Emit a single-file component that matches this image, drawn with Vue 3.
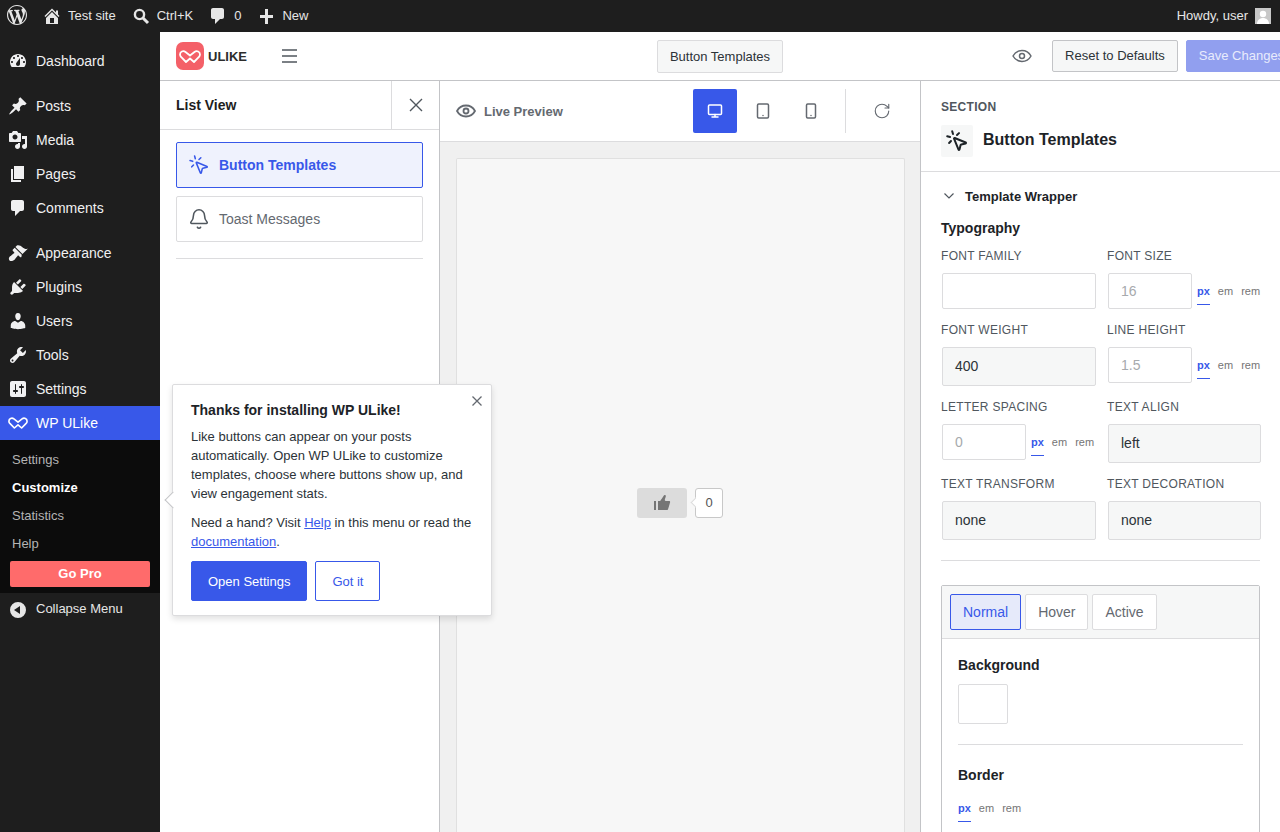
<template>
  <div class="shell">
    <header class="adminbar">
      <div class="bar-left">
        <svg class="wp-logo" viewBox="0 0 20 20"><path :d="icons.wp" /></svg>
        <span class="bar-item"><svg viewBox="0 0 20 20"><path :d="icons.home" fill-rule="evenodd" /></svg>Test site</span>
        <span class="bar-item"><svg viewBox="0 0 20 20"><circle cx="8.5" cy="8.5" r="4.6" fill="none" stroke="currentColor" stroke-width="2.4" /><path d="M12 12l5 5" stroke="currentColor" stroke-width="3" /></svg>Ctrl+K</span>
        <span class="bar-item"><svg viewBox="0 0 20 20"><path :d="icons.comments" /></svg>0</span>
        <span class="bar-item"><svg viewBox="0 0 20 20"><path d="M9 3h3v6h5v3h-5v6H9v-6H4V9h5z" /></svg>New</span>
      </div>
      <div class="howdy">
        Howdy, user
        <span class="avatar">
          <svg viewBox="0 0 16 16"><circle cx="8" cy="6" r="3.2" fill="#fff" /><path d="M2 16c0-4 3-6 6-6s6 2 6 6z" fill="#fff" /></svg>
        </span>
      </div>
    </header>

    <div class="body">
      <nav class="sidebar">
        <ul class="menu">
          <li v-for="item in menu" :key="item.label" class="menu-item" :class="{ current: item.current, gap: item.gap }">
            <svg v-if="item.icon" viewBox="0 0 20 20"><path :d="icons[item.icon]" fill-rule="evenodd" /></svg>
            <svg v-else class="brand-mark" viewBox="3 8 22 13"><path :d="heart" fill="none" stroke="currentColor" stroke-width="1.800" stroke-linejoin="round" /></svg>
            {{ item.label }}
          </li>
        </ul>
        <ul class="submenu">
          <li v-for="sub in submenu" :key="sub" :class="{ on: sub === 'Customize' }">{{ sub }}</li>
          <li class="go-pro-row"><a class="go-pro">Go Pro</a></li>
        </ul>
        <div class="collapse">
          <svg viewBox="0 0 20 20"><path d="M18 10a8 8 0 1 0-16 0 8 8 0 0 0 16 0zm-6-4v8l-6-4z" fill-rule="evenodd" /></svg>
          Collapse Menu
        </div>
      </nav>

      <main class="editor">
        <div class="toolbar">
          <div class="tool-left">
            <svg class="logo" viewBox="0 0 28 28">
              <rect width="28" height="28" rx="7" fill="#f46068" />
              <path :d="heart" fill="none" stroke="#fff" stroke-width="1.800" stroke-linejoin="round" />
            </svg>
            <span class="logo-text">ULIKE</span>
            <svg class="burger" viewBox="0 0 15 14"><path d="M0 1h15M0 7h15M0 13h15" stroke="#50575e" stroke-width="1.500" /></svg>
          </div>
          <button class="btn title-btn">Button Templates</button>
          <div class="tool-right">
            <svg class="stroke-icon eye" viewBox="0 0 20 14"><path d="M1 7c2-3.600 5-5.500 9-5.500S17 3.400 19 7c-2 3.600-5 5.500-9 5.500S3 10.600 1 7z" /><circle cx="10" cy="7" r="2.500" /></svg>
            <button class="btn reset-btn">Reset to Defaults</button>
            <button class="btn save-btn">Save Changes</button>
          </div>
        </div>

        <div class="panes">
          <aside class="list-pane">
            <div class="list-head">
              <span class="list-title">List View</span>
              <span class="list-close"><svg viewBox="0 0 14 14"><path d="M1 1l12 12M13 1L1 13" stroke="#50575e" stroke-width="1.400" /></svg></span>
            </div>
            <div class="list-body">
              <div class="list-item active">
                <svg class="stroke-icon" viewBox="0 0 24 24"><path v-for="d in pointerPaths" :key="d" :d="d" /></svg>
                Button Templates
              </div>
              <div class="list-item">
                <svg class="stroke-icon" viewBox="0 0 24 24"><path d="M10.268 21a2 2 0 0 0 3.464 0" /><path d="M3.262 15.326A1 1 0 0 0 4 17h16a1 1 0 0 0 .74-1.673C19.410 13.956 18 12.499 18 8A6 6 0 0 0 6 8c0 4.499-1.411 5.956-2.738 7.326" /></svg>
                Toast Messages
              </div>
              <hr class="list-rule" />
            </div>
          </aside>

          <section class="preview-pane">
            <div class="preview-bar">
              <span class="live"><svg class="stroke-icon" viewBox="0 0 20 14"><path d="M1 7c2-3.600 5-5.500 9-5.500S17 3.400 19 7c-2 3.600-5 5.500-9 5.500S3 10.600 1 7z" /><circle cx="10" cy="7" r="2.500" /></svg>Live Preview</span>
              <div class="devices">
                <span class="device on"><svg class="stroke-icon" viewBox="0 0 16 16"><rect x="1.500" y="2" width="13" height="9.500" rx="1" /><path d="M5 14h6M8 11.500V14" /></svg></span>
                <span class="device"><svg class="stroke-icon" viewBox="0 0 16 16"><rect x="2.500" y="1" width="11" height="14" rx="1.200" /><path d="M8 12.500h.01" /></svg></span>
                <span class="device"><svg class="stroke-icon" viewBox="0 0 16 16"><rect x="3.500" y="1" width="9" height="14" rx="1.200" /><path d="M8 12.500h.01" /></svg></span>
              </div>
              <span class="refresh"><svg class="stroke-icon" viewBox="0 0 24 24"><path d="M21 12a9 9 0 1 1-9-9c2.520 0 4.930 1 6.740 2.740L21 8" /><path d="M21 3v5h-5" /></svg></span>
            </div>
            <div class="canvas">
              <div class="frame">
                <div class="like">
                  <span class="like-btn"><svg viewBox="0 0 20 20"><path d="M12.720 2c.15-.02.26.02.41.07.56.19.83.79.66 1.350-.17.55-1 3.040-1 3.580 0 .53.75 1 1.350 1h3c.6 0 1 .4 1 1s-2 7-2 7c-.17.39-.55 1-1 1H6V8h2.140c.41-.41 3.300-4.710 3.580-5.270.21-.41.6-.68 1-.73zM2 8h2v9H2V8z" /></svg></span>
                  <span class="like-count">0</span>
                </div>
              </div>
            </div>
          </section>

          <aside class="settings-pane">
            <div class="section-head">
              <div class="eyebrow">SECTION</div>
              <div class="section-title">
                <span class="section-icon"><svg class="stroke-icon" viewBox="0 0 24 24"><path v-for="d in pointerPaths" :key="d" :d="d" /></svg></span>
                Button Templates
              </div>
            </div>
            <div class="section-body">
              <div class="accordion"><svg viewBox="0 0 12 8"><path d="M1.500 1.500L6 6l4.500-4.500" fill="none" stroke="#50575e" stroke-width="1.200" /></svg>Template Wrapper</div>
              <h3 class="group-title">Typography</h3>
              <div class="fields">
                <div v-for="f in fields" :key="f.label" class="field">
                  <label>{{ f.label }}</label>
                  <div v-if="f.type === 'select'" class="select">{{ f.value }}</div>
                  <div v-else-if="f.type === 'text'" class="input wide"></div>
                  <div v-else class="with-units">
                    <div class="input number">{{ f.value }}</div>
                    <div class="units"><span class="on">px</span><span>em</span><span>rem</span></div>
                  </div>
                </div>
              </div>
              <hr class="rule" />
              <div class="states">
                <div class="state-tabs">
                  <span v-for="t in tabs" :key="t" class="state-tab" :class="{ on: t === 'Normal' }">{{ t }}</span>
                </div>
                <div class="state-body">
                  <h3 class="group-title">Background</h3>
                  <div class="swatch"></div>
                  <hr class="inner-rule" />
                  <h3 class="group-title">Border</h3>
                  <div class="units"><span class="on">px</span><span>em</span><span>rem</span></div>
                </div>
              </div>
            </div>
          </aside>
        </div>

        <div class="pointer">
          <span class="pointer-arrow"></span>
          <span class="pointer-close"><svg viewBox="0 0 12 12"><path d="M1.500 1.500l9 9M10.500 1.500l-9 9" stroke="#646970" stroke-width="1.300" /></svg></span>
          <h4>Thanks for installing WP ULike!</h4>
          <p>Like buttons can appear on your posts automatically. Open WP ULike to customize templates, choose where buttons show up, and view engagement stats.</p>
          <p>Need a hand? Visit <a>Help</a> in this menu or read the <a>documentation</a>.</p>
          <div class="pointer-actions">
            <button class="primary">Open Settings</button>
            <button class="ghost">Got it</button>
          </div>
        </div>
      </main>
    </div>
  </div>
</template>

<script setup>
const heart = 'M4 12.500c0-2.800 3.200-4.300 5.500-2.500l4.500 3.500 4.500-3.500c2.300-1.800 5.500-.3 5.500 2.500 0 1-.5 2-1.300 2.700L18 20l-4-3.500L10 20l-4.700-4.800C4.500 14.500 4 13.500 4 12.500z'

const icons = {
  wp: 'M20 10c0-5.510-4.490-10-10-10C4.480 0 0 4.490 0 10c0 5.520 4.480 10 10 10 5.510 0 10-4.480 10-10zM7.780 15.370L4.370 6.220c.55-.02 1.170-.08 1.170-.08.5-.06.44-1.130-.06-1.110 0 0-1.450.11-2.370.11-.18 0-.37 0-.58-.01C4.120 2.690 6.870 1.110 10 1.110c2.330 0 4.450.87 6.050 2.340-.68-.11-1.650.39-1.650 1.580 0 .74.45 1.360.9 2.100.35.61.55 1.360.55 2.460 0 1.490-1.400 5-1.400 5l-3.030-8.370c.54-.02.82-.17.82-.17.5-.05.44-1.250-.06-1.220 0 0-1.440.12-2.380.12-.87 0-2.330-.12-2.330-.12-.5-.03-.56 1.200-.06 1.220l.92.08 1.260 3.410zM17.410 10c.24-.64.74-1.870.43-4.250.7 1.290 1.050 2.710 1.050 4.250 0 3.290-1.730 6.240-4.400 7.780.97-2.590 1.940-5.200 2.920-7.780zM6.100 18.090C3.120 16.650 1.110 13.530 1.110 10c0-1.300.23-2.480.72-3.590C3.250 10.300 4.670 14.200 6.100 18.090zm4.030-6.630l2.580 6.980c-.86.29-1.760.45-2.710.45-.79 0-1.570-.11-2.290-.33.81-2.380 1.620-4.740 2.420-7.100z',
  home: 'M16 8.500l1.530 1.530-1.060 1.060L10 4.620l-6.470 6.470-1.060-1.060L10 2.500l4 4v-2h2v4zm-6-2.460l6 5.990V18H4v-5.970zM12 17v-5H8v5h4z',
  dashboard: 'M3.760 16h12.480c1.100-1.370 1.760-3.110 1.760-5 0-4.420-3.580-8-8-8s-8 3.580-8 8c0 1.890.66 3.630 1.760 5zM10 4c.55 0 1 .45 1 1s-.45 1-1 1-1-.45-1-1 .45-1 1-1zM6 6c.55 0 1 .45 1 1s-.45 1-1 1-1-.45-1-1 .45-1 1-1zm8 0c.55 0 1 .45 1 1s-.45 1-1 1-1-.45-1-1 .45-1 1-1zm-5.370 5.550L12 7v6c0 1.100-.9 2-2 2s-2-.9-2-2c0-.57.24-1.080.63-1.450zM4 10c.55 0 1 .45 1 1s-.45 1-1 1-1-.45-1-1 .45-1 1-1zm12 0c.55 0 1 .45 1 1s-.45 1-1 1-1-.45-1-1 .45-1 1-1z',
  posts: 'M10.440 3.020l1.820-1.820 6.360 6.350-1.830 1.820c-1.050-.68-2.480-.57-3.410.36l-.75.75c-.92.93-1.040 2.350-.35 3.410l-1.830 1.820-2.410-2.410-2.800 2.790c-.42.42-3.380 2.710-3.800 2.290s1.860-3.390 2.280-3.810l2.790-2.790L4.100 9.360l1.830-1.820c1.050.69 2.480.57 3.410-.36l.75-.75c.93-.92 1.050-2.350.35-3.410z',
  media: 'M13 11V4c0-.55-.45-1-1-1h-1.670L9 1H5L3.670 3H2c-.55 0-1 .45-1 1v7c0 .55.45 1 1 1h10c.55 0 1-.45 1-1zM7 4.500c1.380 0 2.500 1.120 2.500 2.500S8.380 9.500 7 9.500 4.500 8.380 4.500 7 5.620 4.500 7 4.500zM14 6h5v10.500c0 1.380-1.120 2.500-2.500 2.500S14 17.880 14 16.500s1.120-2.500 2.500-2.500c.17 0 .34.02.5.05V9h-3V6zm-4 8.050V13h2v3.500c0 1.380-1.120 2.500-2.500 2.500S7 17.880 7 16.500 8.120 14 9.500 14c.17 0 .34.02.5.05z',
  pages: 'M6 15V2h10v13H6zm-1 1h8v2H3V5h2v11z',
  comments: 'M5 2h9c1.100 0 2 .9 2 2v7c0 1.100-.9 2-2 2h-2l-5 5v-5H5c-1.100 0-2-.9-2-2V4c0-1.100.9-2 2-2z',
  appearance: 'M14.480 11.060L7.410 3.990l1.500-1.500c.5-.56 2.300-.47 3.510.32 1.210.8 1.430 1.280 2.910 2.100 1.180.64 2.450 1.260 4.450.85zm-.71.71L6.700 4.700 4.930 6.470c-.39.39-.39 1.020 0 1.410l1.060 1.060c.39.39.39 1.030 0 1.420-.6.6-1.430 1.110-2.210 1.690-.35.26-.7.53-1.010.84C1.430 13.230 0 15.900 1.500 17.400s4.170.07 5.500-1.270c.31-.31.58-.66.84-1.010.58-.78 1.090-1.610 1.690-2.210.39-.39 1.020-.39 1.410 0l1.060 1.060c.39.39 1.020.39 1.410 0z',
  plugins: 'M13.110 4.360L9.870 7.600 8 5.730l3.240-3.240c.35-.34 1.050-.2 1.560.32.52.51.66 1.210.31 1.550zm-8 1.770l.91-1.120 9.010 9.010-1.190.84c-.71.71-2.630 1.160-3.820 1.160H6.140L4.900 17.260c-.59.59-1.540.59-2.120 0-.59-.58-.59-1.530 0-2.120l1.240-1.240v-3.880c0-1.130.4-3.190 1.090-3.890zm7.260 3.970l3.240-3.240c.34-.35 1.040-.21 1.550.31.52.51.66 1.210.31 1.550l-3.240 3.250z',
  users: 'M10 9.250c-2.270 0-2.730-3.440-2.730-3.440C7 4.020 7.820 2 9.970 2c2.160 0 2.980 2.020 2.710 3.810 0 0-.41 3.440-2.680 3.440zm0 2.570L12.720 10c2.390 0 4.520 2.330 4.520 4.530v2.490s-3.650 1.130-7.240 1.130c-3.650 0-7.240-1.130-7.240-1.130v-2.490c0-2.250 1.940-4.480 4.470-4.480z',
  tools: 'M16.680 9.770c-1.340 1.340-3.300 1.670-4.950.99l-5.410 6.520c-.99.99-2.590.99-3.580 0s-.99-2.590 0-3.570l6.520-5.420c-.68-1.650-.35-3.610.99-4.950 1.280-1.280 3.120-1.620 4.720-1.060l-2.890 2.890 2.820 2.820 2.860-2.870c.53 1.580.18 3.390-1.080 4.650zM3.810 16.210c.4.39 1.040.39 1.430 0 .4-.4.4-1.040 0-1.430-.39-.4-1.030-.4-1.430 0-.39.39-.39 1.030 0 1.430z',
  settings: 'M18 16V4c0-1.100-.9-2-2-2H4c-1.100 0-2 .9-2 2v12c0 1.100.9 2 2 2h12c1.100 0 2-.9 2-2zM8 11h1c.55 0 1 .45 1 1s-.45 1-1 1H8v1.500c0 .28-.22.5-.5.5s-.5-.22-.5-.5V13H6c-.55 0-1-.45-1-1s.45-1 1-1h1V5.500c0-.28.22-.5.5-.5s.5.22.5.5V11zm5-2h-1c-.55 0-1-.45-1-1s.45-1 1-1h1V5.500c0-.28.22-.5.5-.5s.5.22.5.5V7h1c.55 0 1 .45 1 1s-.45 1-1 1h-1v5.500c0 .28-.22.5-.5.5s-.5-.22-.5-.5V9z',
}

const menu = [
  { label: 'Dashboard', icon: 'dashboard' },
  { label: 'Posts', icon: 'posts', gap: true },
  { label: 'Media', icon: 'media' },
  { label: 'Pages', icon: 'pages' },
  { label: 'Comments', icon: 'comments' },
  { label: 'Appearance', icon: 'appearance', gap: true },
  { label: 'Plugins', icon: 'plugins' },
  { label: 'Users', icon: 'users' },
  { label: 'Tools', icon: 'tools' },
  { label: 'Settings', icon: 'settings' },
  { label: 'WP ULike', current: true },
]

const submenu = ['Settings', 'Customize', 'Statistics', 'Help']

const pointerPaths = [
  'M14 4.100 12 6',
  'm5.100 8-2.900-.8',
  'm6 12-1.900 2',
  'M7.200 2.200 8 5.100',
  'M9.037 9.690a.498.498 0 0 1 .653-.653l11 4.500a.5.5 0 0 1-.074.949l-4.349 1.041a1 1 0 0 0-.74.739l-1.040 4.350a.5.5 0 0 1-.95.074z',
]

const fields = [
  { label: 'Font Family', type: 'text' },
  { label: 'Font Size', type: 'number', value: '16' },
  { label: 'Font Weight', type: 'select', value: '400' },
  { label: 'Line Height', type: 'number', value: '1.5' },
  { label: 'Letter Spacing', type: 'number', value: '0' },
  { label: 'Text Align', type: 'select', value: 'left' },
  { label: 'Text Transform', type: 'select', value: 'none' },
  { label: 'Text Decoration', type: 'select', value: 'none' },
]

const tabs = ['Normal', 'Hover', 'Active']
</script>

<style>
html,
body {
  margin: 0;
  background: #fff;
}
</style>

<style scoped>
.shell {
  width: 1280px;
  height: 832px;
  overflow: hidden;
  font-family: "Liberation Sans", Arial, sans-serif;
  font-size: 13px;
  color: #1e1e1e;
  background: #fff;
}
svg {
  display: block;
  fill: currentColor;
  flex: none;
}
ul {
  list-style: none;
  margin: 0;
  padding: 0;
}
button {
  font-family: inherit;
  margin: 0;
}

/* admin bar */
.adminbar {
  height: 32px;
  box-sizing: border-box;
  padding: 0 9px 2px 7px;
  background: #1e1e1e;
  color: #e6e6e6;
  display: flex;
  justify-content: space-between;
  align-items: center;
}
.bar-left {
  display: flex;
  align-items: center;
}
.wp-logo {
  width: 20px;
  height: 20px;
  margin-right: 15px;
}
.bar-item {
  display: flex;
  align-items: center;
  gap: 6px;
  margin-right: 15px;
}
.bar-item svg {
  width: 20px;
  height: 20px;
  margin-top: 2px;
}
.howdy {
  display: flex;
  align-items: center;
  gap: 7px;
}
.avatar {
  width: 16px;
  height: 16px;
  background: #c8c8c8;
  overflow: hidden;
  margin-top: 1px;
}

.body {
  display: flex;
  height: 800px;
}

/* sidebar */
.sidebar {
  width: 160px;
  flex: none;
  background: #1e1e1e;
  padding-top: 12px;
  color: #f0f0f1;
}
.menu-item {
  height: 34px;
  display: flex;
  align-items: center;
  gap: 8px;
  padding-left: 8px;
  font-size: 14px;
}
.menu-item.gap {
  margin-top: 11px;
}
.menu-item svg {
  width: 20px;
  height: 20px;
}
.menu-item .brand-mark {
  width: 20px;
  height: 12px;
}
.menu-item.current {
  background: #3858e9;
  color: #fff;
}
.submenu {
  background: #0c0c0c;
  padding: 6px 0 6px;
  color: #b4b4b4;
}
.submenu li {
  height: 28px;
  line-height: 28px;
  padding-left: 12px;
}
.submenu li.on {
  color: #fff;
  font-weight: 700;
}
.submenu li.go-pro-row {
  height: 26px;
  padding: 0 10px;
  margin-top: 3px;
}
.go-pro {
  display: block;
  height: 26px;
  line-height: 25px;
  background: #ff6b6b;
  border-radius: 2px;
  color: #fff;
  font-weight: 700;
  text-align: center;
}
.collapse {
  display: flex;
  align-items: center;
  gap: 8px;
  padding: 4px 0 0 8px;
  color: #e6e6e6;
}
.collapse svg {
  width: 20px;
  height: 20px;
  margin-top: 3px;
}

/* editor */
.editor {
  position: relative;
  flex: 1;
  min-width: 0;
}
.toolbar {
  height: 48px;
  border-bottom: 1px solid #c3c4c7;
  display: grid;
  grid-template-columns: minmax(0, 1fr) auto minmax(0, 1fr);
  align-items: center;
}
.tool-left {
  display: flex;
  align-items: center;
  padding-left: 16px;
}
.logo {
  width: 28px;
  height: 28px;
}
.logo-text {
  margin-left: 4px;
  font-size: 13px;
  font-weight: 700;
  color: #2c2c2c;
}
.burger {
  width: 15px;
  height: 14px;
  margin-left: 35px;
}
.btn {
  height: 32px;
  padding: 0 12px;
  border: 1px solid #c3c4c7;
  border-radius: 2px;
  background: #f6f7f7;
  font-size: 13px;
  color: #2c3338;
  white-space: nowrap;
}
.title-btn {
  height: 33px;
  border-color: #dcdcde;
}
.tool-right {
  display: flex;
  align-items: center;
  padding-left: 229px;
  white-space: nowrap;
}
.eye {
  width: 20px;
  height: 14px;
  color: #646970;
  margin-right: 20px;
  stroke-width: 1.8;
}
.save-btn {
  margin-left: 8px;
  background: #919fef;
  border-color: #919fef;
  color: #e8ebfc;
  flex: none;
  padding-bottom: 2px;
}
.reset-btn {
  flex: none;
  padding-bottom: 2px;
}
.stroke-icon {
  fill: none;
  stroke: currentColor;
  stroke-width: 1.5;
  stroke-linecap: round;
  stroke-linejoin: round;
}

.panes {
  display: flex;
  height: 751px;
}

/* list pane */
.list-pane {
  width: 280px;
  flex: none;
  border-right: 1px solid #c3c4c7;
  box-sizing: border-box;
}
.list-head {
  height: 48px;
  border-bottom: 1px solid #dcdcde;
  display: flex;
  align-items: center;
  justify-content: space-between;
  padding-left: 16px;
}
.list-title {
  font-size: 14px;
  font-weight: 700;
}
.list-close {
  width: 47px;
  height: 48px;
  border-left: 1px solid #dcdcde;
  display: flex;
  align-items: center;
  justify-content: center;
}
.list-close svg {
  width: 14px;
  height: 14px;
}
.list-body {
  padding: 12px 16px 0;
}
.list-item {
  height: 46px;
  box-sizing: border-box;
  border: 1px solid #dcdcde;
  border-radius: 2px;
  display: flex;
  align-items: center;
  gap: 9px;
  padding-left: 11px;
  font-size: 14px;
  color: #646970;
  margin-bottom: 8px;
}
.list-item svg {
  width: 22px;
  height: 22px;
  color: #50575e;
  stroke-width: 1.7;
}
.list-item.active {
  border-color: #3858e9;
  background: #eff2fd;
  color: #3858e9;
  font-weight: 700;
}
.list-item.active svg {
  color: #3858e9;
}
.list-rule {
  margin: 16px 0 0;
  border: 0;
  border-top: 1px solid #dcdcde;
}

/* preview */
.preview-pane {
  width: 481px;
  flex: none;
  border-right: 1px solid #c3c4c7;
  box-sizing: border-box;
  display: flex;
  flex-direction: column;
}
.preview-bar {
  height: 60px;
  flex: none;
  border-bottom: 1px solid #dcdcde;
  display: flex;
  align-items: center;
  padding-left: 16px;
}
.live {
  display: flex;
  align-items: center;
  gap: 8px;
  width: 237px;
  font-size: 13px;
  font-weight: 700;
  color: #646970;
}
.live svg {
  width: 20px;
  height: 14px;
  stroke-width: 1.8;
}
.devices {
  display: flex;
  gap: 4px;
  padding-right: 12px;
  border-right: 1px solid #dcdcde;
}
.device {
  width: 44px;
  height: 44px;
  border-radius: 2px;
  display: flex;
  align-items: center;
  justify-content: center;
  color: #646970;
}
.device svg {
  width: 16px;
  height: 16px;
}
.device.on {
  background: #3858e9;
  color: #fff;
}
.refresh {
  color: #646970;
  margin-left: 27px;
}
.refresh svg {
  width: 18px;
  height: 18px;
}
.canvas {
  flex: 1;
  background: #f0f0f0;
  padding: 16px 15px 0 16px;
  display: flex;
}
.frame {
  flex: 1;
  background: #f7f7f7;
  border: 1px solid #e0e0e0;
  border-bottom: 0;
  border-radius: 2px 2px 0 0;
  display: flex;
  justify-content: center;
  padding-top: 329px;
}
.like {
  display: flex;
  align-items: flex-start;
  gap: 8px;
  padding-right: 2px;
}
.like-btn {
  width: 50px;
  height: 30px;
  background: #dcdcdc;
  border-radius: 3px;
  display: flex;
  align-items: center;
  justify-content: center;
  color: #757575;
}
.like-btn svg {
  width: 20px;
  height: 20px;
}
.like-count {
  position: relative;
  width: 26px;
  height: 28px;
  line-height: 28px;
  text-align: center;
  text-indent: 1px;
  background: #fff;
  border: 1px solid #c8c8c8;
  border-radius: 3px;
  color: #555;
}
.like-count::before {
  content: "";
  position: absolute;
  left: -4px;
  top: 10px;
  width: 6px;
  height: 6px;
  background: #fff;
  border-left: 1px solid #dcdcdc;
  border-bottom: 1px solid #dcdcdc;
  transform: rotate(45deg);
}

/* settings */
.settings-pane {
  flex: 1;
  min-width: 0;
}
.section-head {
  height: 91px;
  padding: 18px 20px 0;
  box-sizing: border-box;
  border-bottom: 1px solid #dcdcde;
}
.eyebrow {
  font-size: 12px;
  line-height: 16px;
  font-weight: 700;
  color: #50575e;
  letter-spacing: 0.3px;
}
.section-title {
  display: flex;
  align-items: flex-start;
  gap: 10px;
  margin-top: 10px;
  font-size: 16px;
  line-height: 30px;
  font-weight: 700;
  color: #1d2327;
}
.section-icon {
  width: 32px;
  height: 32px;
  background: #f6f7f7;
  border-radius: 2px;
  display: flex;
  align-items: center;
  justify-content: center;
}
.section-icon svg {
  width: 24px;
  height: 24px;
  stroke-width: 2;
}
.section-body {
  padding: 14px 20px 0;
}
.accordion {
  height: 20px;
  display: flex;
  align-items: center;
  gap: 10px;
  font-weight: 700;
  color: #1d2327;
  padding-left: 2px;
}
.accordion svg {
  width: 12px;
  height: 8px;
}
.group-title {
  margin: 0;
  font-size: 14px;
  line-height: 16px;
  font-weight: 700;
  color: #1d2327;
}
.section-body > .group-title {
  margin-top: 14px;
}
.fields {
  display: grid;
  grid-template-columns: 156px 155px;
  column-gap: 10px;
  row-gap: 13px;
  margin-top: 12px;
}
.field label {
  display: block;
  font-size: 12px;
  line-height: 16px;
  color: #50575e;
  text-transform: uppercase;
  letter-spacing: 0.3px;
  margin-bottom: 9px;
}
.input,
.select {
  box-sizing: border-box;
  margin: 0 1px;
  border: 1px solid #dcdcde;
  border-radius: 2px;
  font-size: 14px;
  padding-left: 12px;
}
.input {
  height: 36px;
  line-height: 34px;
  color: #a7aaad;
  background: #fff;
}
.select {
  height: 39px;
  line-height: 37px;
  background: #f6f7f7;
  color: #2c3338;
}
.with-units {
  display: flex;
  align-items: flex-start;
}
.number {
  width: 84px;
  flex: none;
}
.units {
  display: flex;
  gap: 8px;
  font-size: 11px;
  line-height: 14px;
  color: #757575;
}
.with-units .units {
  margin: 4px 0 0 4px;
}
.units span {
  padding: 7px 0 6px;
  border-bottom: 1px solid transparent;
}
.units .on {
  color: #3858e9;
  font-weight: 700;
  border-bottom-color: #3858e9;
}
.rule {
  margin: 20px 0 24px;
  border: 0;
  border-top: 1px solid #dcdcde;
}
.states {
  border: 1px solid #c3c4c7;
  border-radius: 2px 2px 0 0;
  width: 319px;
  box-sizing: border-box;
}
.state-tabs {
  display: flex;
  gap: 4px;
  padding: 8px;
  height: 53px;
  box-sizing: border-box;
  background: #f6f7f7;
  border-bottom: 1px solid #dcdcde;
}
.state-tab {
  height: 36px;
  line-height: 34px;
  box-sizing: border-box;
  padding: 0 12px;
  background: #fff;
  border: 1px solid #dcdcde;
  border-radius: 2px;
  font-size: 14px;
  color: #646970;
}
.state-tab.on {
  background: #e6eafa;
  border-color: #3858e9;
  color: #3858e9;
}
.state-body {
  padding: 18px 16px 40px;
}
.swatch {
  width: 50px;
  height: 40px;
  box-sizing: border-box;
  border: 1px solid #dcdcde;
  border-radius: 2px;
  margin-top: 11px;
}
.inner-rule {
  margin: 20px 0 22px;
  border: 0;
  border-top: 1px solid #dcdcde;
}
.state-body .units {
  margin-top: 11px;
}

/* onboarding pointer */
.pointer {
  position: absolute;
  left: 12px;
  top: 352px;
  width: 320px;
  height: 232px;
  box-sizing: border-box;
  padding: 17px 18px;
  background: #fff;
  border: 1px solid #dcdcde;
  border-radius: 2px;
  box-shadow: 0 3px 6px rgba(0, 0, 0, 0.12);
  z-index: 5;
}
.pointer-arrow {
  position: absolute;
  left: -6px;
  top: 109px;
  width: 11px;
  height: 11px;
  background: #fff;
  border-left: 1px solid #c3c4c7;
  border-bottom: 1px solid #c3c4c7;
  transform: rotate(45deg);
}
.pointer-close {
  position: absolute;
  right: 8px;
  top: 10px;
}
.pointer-close svg {
  width: 12px;
  height: 12px;
}
.pointer h4 {
  margin: 0 0 8px;
  font-size: 14px;
  line-height: 17px;
  color: #1d2327;
}
.pointer p {
  margin: 0 0 10px;
  line-height: 19px;
  color: #2c3338;
}
.pointer a {
  color: #3858e9;
  text-decoration: underline;
}
.pointer-actions {
  display: flex;
  gap: 8px;
  margin-top: 10px;
}
.pointer-actions button {
  height: 40px;
  border-radius: 2px;
  font-size: 13px;
  padding: 0 16px;
}
.primary {
  background: #3858e9;
  border: 1px solid #3858e9;
  color: #fff;
}
.ghost {
  background: #fff;
  border: 1px solid #3858e9;
  color: #3858e9;
}
</style>
